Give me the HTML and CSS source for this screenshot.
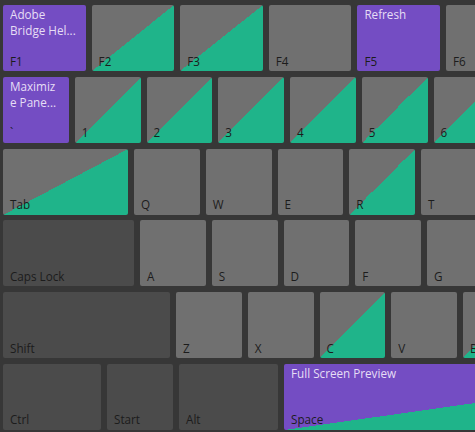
FILE: index.html
```html
<!DOCTYPE html>
<html lang="en">
<head>
<meta charset="utf-8">
<title>Keyboard Shortcuts</title>
<link rel="stylesheet" href="styles.css">
</head>
<body>
<div class="keyboard">
  <div class="row">
    <div class="key fn cmd"><span class="title">Adobe Bridge Hel...</span><span class="label">F1</span></div>
    <div class="key fn mod"><span class="label">F2</span></div>
    <div class="key fn mod"><span class="label">F3</span></div>
    <div class="key fn"><span class="label">F4</span></div>
    <div class="key fn cmd"><span class="title">Refresh</span><span class="label">F5</span></div>
    <div class="key fn"><span class="label">F6</span></div>
  </div>
  <div class="row">
    <div class="key grave cmd"><span class="title">Maximize Pane...</span><span class="label">`</span></div>
    <div class="key mod"><span class="label">1</span></div>
    <div class="key mod"><span class="label">2</span></div>
    <div class="key mod"><span class="label">3</span></div>
    <div class="key mod"><span class="label">4</span></div>
    <div class="key mod"><span class="label">5</span></div>
    <div class="key mod"><span class="label">6</span></div>
  </div>
  <div class="row">
    <div class="key tab mod"><span class="label">Tab</span></div>
    <div class="key"><span class="label">Q</span></div>
    <div class="key"><span class="label">W</span></div>
    <div class="key"><span class="label">E</span></div>
    <div class="key mod"><span class="label">R</span></div>
    <div class="key"><span class="label">T</span></div>
  </div>
  <div class="row">
    <div class="key caps dark"><span class="label">Caps Lock</span></div>
    <div class="key"><span class="label">A</span></div>
    <div class="key"><span class="label">S</span></div>
    <div class="key"><span class="label">D</span></div>
    <div class="key"><span class="label">F</span></div>
    <div class="key"><span class="label">G</span></div>
  </div>
  <div class="row">
    <div class="key shift dark"><span class="label">Shift</span></div>
    <div class="key"><span class="label">Z</span></div>
    <div class="key"><span class="label">X</span></div>
    <div class="key mod"><span class="label">C</span></div>
    <div class="key"><span class="label">V</span></div>
    <div class="key mod"><span class="label">B</span></div>
  </div>
  <div class="row">
    <div class="key ctrl dark"><span class="label">Ctrl</span></div>
    <div class="key start dark"><span class="label">Start</span></div>
    <div class="key alt dark"><span class="label">Alt</span></div>
    <div class="key space modcmd"><span class="title">Full Screen Preview</span><span class="label">Space</span></div>
  </div>
</div>
</body>
</html>
```
FILE: styles.css
```css
html, body {
  margin: 0;
  padding: 0;
  background: #373737;
  overflow: hidden;
  width: 475px;
  height: 432px;
}

.keyboard {
  display: flex;
  flex-direction: column;
  gap: 5.8px;
  padding: 5px 0 0 3px;
  font-family: "Open Sans", "Noto Sans", sans-serif;
  font-size: 11.7px;
}

.row {
  display: flex;
  gap: 6px;
}

.key {
  flex: 0 0 auto;
  box-sizing: border-box;
  width: 65.75px;
  height: 66px;
  border-radius: 2px;
  background: #707070;
  padding: 1px 5px 2.5px 7px;
  display: flex;
  flex-direction: column;
  overflow: hidden;
}

.key .label {
  margin-top: auto;
  color: #1c1c1c;
  line-height: 16px;
  white-space: nowrap;
}

.key .title {
  color: #e6def5;
  line-height: 16px;
  display: -webkit-box;
  -webkit-box-orient: vertical;
  -webkit-line-clamp: 2;
  overflow: hidden;
  overflow-wrap: anywhere;
}

.fn { width: 82.6px; }
.grave { padding-right: 10px; }
.tab { width: 125px; }
.caps { width: 131px; }
.shift { width: 167px; }
.ctrl { width: 98px; }
.start { width: 66px; }
.alt { width: 99px; }
.space { width: 467px; }

.dark { background: #4b4b4b; }

.cmd { background: #744dc3; }

.mod {
  background: linear-gradient(to bottom right, #707070 50%, #1fb48a 50%);
}

.modcmd {
  background: linear-gradient(to bottom right, #744dc3 50%, #1fb48a 50%);
}
```
